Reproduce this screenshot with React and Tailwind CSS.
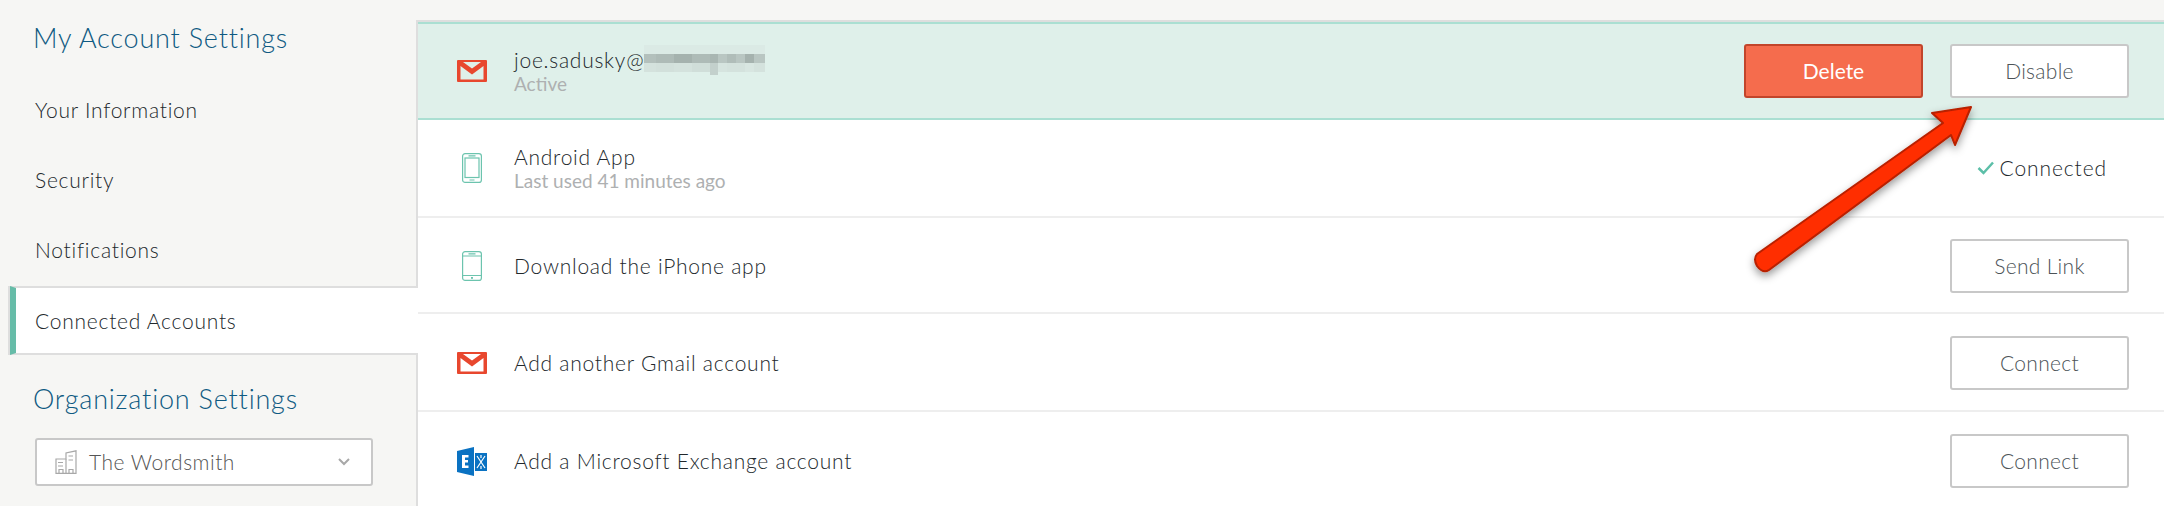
const font = 'font-["Lato","Noto_Sans",sans-serif]';

const GmailIcon = () => (
  <svg width="30" height="22" viewBox="0 0 30 22">
    <path
      fillRule="evenodd"
      d="M1 0 H29 Q30 0 30 1 V21 Q30 22 29 22 H1 Q0 22 0 21 V1 Q0 0 1 0 Z M6 2 L15 8.5 L24 2 Z M3.5 6 V19.5 H26.5 V6 L15 14.5 Z"
      fill="#e8472e"
    />
  </svg>
);

const AndroidIcon = () => (
  <svg width="20" height="30" viewBox="0 0 20 30" fill="none" stroke="#6cc4ae" strokeWidth="1.2">
    <rect x="0.6" y="0.6" width="18.8" height="28.8" rx="2.5" />
    <rect x="3" y="5" width="14" height="19.5" />
    <path d="M6.5 2.9 H13.5 M7.5 27 H12.5" />
  </svg>
);

const IphoneIcon = () => (
  <svg width="20" height="30" viewBox="0 0 20 30" fill="none" stroke="#6cc4ae" strokeWidth="1.2">
    <rect x="0.6" y="0.6" width="18.8" height="28.8" rx="2.5" />
    <path d="M0.6 5 H19.4 M0.6 24.5 H19.4 M6.5 2.9 H13.5" />
    <rect x="9" y="26" width="2" height="1.8" fill="#6cc4ae" stroke="none" />
  </svg>
);

const ExchangeIcon = () => (
  <svg width="30" height="29" viewBox="0 0 30 29">
    <path d="M0 4 L17 0 V29 L0 25 Z" fill="#0a72c2" />
    <path d="M5 8 H11.5 V10.5 H8 V13 H11 V15.5 H8 V18.5 H11.5 V21 H5 Z" fill="#fff" />
    <rect x="18" y="6" width="12" height="18" fill="#0a72c2" />
    <path d="M20 9 L28 21 M28 9 L20 21 M24 8 V11 M24 19 V22" stroke="#fff" strokeWidth="1.2" fill="none" />
  </svg>
);

const BuildingIcon = () => (
  <svg width="22" height="24" viewBox="0 0 22 24" fill="none" stroke="#a8a8a8" strokeWidth="1.2">
    <path d="M11 23.4 H1 V9 H11 V3 L21 0.8 V23.4 H11" />
    <path d="M11 9 V23 M13.5 6 H18 M13.5 10 H18 M3 12.5 H8 M3 16 H8 M4 23 V19.5 H8 V23 M14 23 V19.5 H18 V23" />
  </svg>
);

// pixelated blur over the address
const BlurredEmail = () => {
  const cols = [
    [0, 12, '#b3c0bc', '#d4e2dd'], [12, 18, '#aebbb7', '#d2e0db'], [30, 18, '#a5b2ae', '#d4e2dd'], [48, 18, '#aebbb7', '#d0ded9'],
    [66, 8, '#a9b6b2', '#c3d0cc'], [74, 9, '#b9c6c2', '#d6e4df'], [83, 9, '#b0bdb9', '#d4e2dd'], [92, 9, '#b9c6c2', '#d4e2dd'],
    [101, 9, '#a5b2ae', '#d8e6e1'], [110, 11, '#b9c6c2', '#d4e2dd'],
  ];
  return (
    <svg width="121" height="30" viewBox="0 0 121 30">
      <rect x="0" y="0" width="121" height="9" fill="#dbeae5" />
      {cols.map(([x, w, dark, light]) => (
        <g key={x}>
          <rect x={x} y="9" width={w} height="9" fill={dark} />
          <rect x={x} y="18" width={w} height="9" fill={light} />
        </g>
      ))}
      <rect x="66" y="27" width="8" height="3" fill="#c3d0cc" />
    </svg>
  );
};

const Arrow = () => (
  <svg className="absolute left-[1740px] top-[90px]" width="250" height="210" viewBox="0 0 250 210">
    <defs>
      <filter id="arrowShadow" x="-20%" y="-20%" width="140%" height="140%">
        <feDropShadow dx="0" dy="4" stdDeviation="4" floodColor="#000" floodOpacity="0.4" />
      </filter>
    </defs>
    <path
      d="M17 164 L203 33 L192 23 L231 17 L215 55 L211 45 L29 180 Q23 184 17 176 Q13 169 17 164 Z"
      fill="#ff2d00"
      stroke="#b82000"
      strokeWidth="2"
      strokeLinejoin="round"
      filter="url(#arrowShadow)"
    />
  </svg>
);

const Button = ({ children }) => (
  <button className="w-[179px] h-[54px] bg-white border-2 border-[#c8c8c8] rounded-[3px] text-[21px] font-light text-[#4c5357] tracking-[0.3px]">
    {children}
  </button>
);

const Row = ({ icon, title, sub, children, className }) => (
  <div className={`flex items-center pl-[38px] pr-[35px] ${className}`}>
    <div className="w-[32px] flex justify-center shrink-0">{icon}</div>
    <div className="ml-[26px] flex-1">
      {title}
      {sub && <div className="text-[19px] leading-[22px] text-[#aeb0b1]">{sub}</div>}
    </div>
    {children}
  </div>
);

const Title = ({ children }) => (
  <div className="text-[21px] leading-[26px] font-light text-[#22282c] tracking-[0.75px]">{children}</div>
);

const NavItem = ({ children, active }) => (
  <div
    className={
      active
        ? 'h-[69px] mt-[1px] flex items-center ml-[10px] pl-[19px] bg-white border-y-2 border-[#dedede] border-l-[6px] border-l-[#66bca8] shadow-[-2px_0_0_#dedede] text-[21px] font-light text-[#22282c] tracking-[0.75px] -mr-[2px] relative z-10'
        : 'h-[70px] flex items-center pl-[35px] text-[21px] font-light text-[#22282c] tracking-[0.75px]'
    }
  >
    {children}
  </div>
);

export default function App() {
  return (
    <div className={`relative flex h-[506px] overflow-hidden bg-[#f6f6f4] ${font}`}>
      {/* Sidebar */}
      <aside className="w-[416px] shrink-0">
        <h2 className="pl-[33px] pt-[20px] text-[27px] leading-[36px] font-light text-[#0f5a82] tracking-[0.8px]">My Account Settings</h2>
        <nav className="mt-[19px]">
          <NavItem>Your Information</NavItem>
          <NavItem>Security</NavItem>
          <NavItem>Notifications</NavItem>
          <NavItem active>Connected Accounts</NavItem>
        </nav>
        <h2 className="pl-[33px] pt-[26px] text-[27px] leading-[36px] font-light text-[#0f5a82] tracking-[0.8px]">Organization Settings</h2>
        <div className="ml-[35px] mt-[21px] w-[338px] h-[48px] flex items-center pl-[18px] pr-[20px] bg-white border-2 border-[#c8c8c8] rounded-[3px]">
          <BuildingIcon />
          <span className="ml-[12px] flex-1 text-[21px] font-light text-[#555] tracking-[0.5px]">The Wordsmith</span>
          <svg width="14" height="10" viewBox="0 0 14 10" fill="none" stroke="#a8a8a8" strokeWidth="2">
            <path d="M2 2 L7 7 L12 2" />
          </svg>
        </div>
      </aside>

      {/* Accounts list */}
      <main className="flex-1 mt-[20px] bg-white border-l-2 border-t-2 border-[#dedede]">
        <Row
          className="h-[98px] bg-[#dff0ea] border-y-2 border-[#aadfd2]"
          icon={<GmailIcon />}
          title={
            <div className="flex items-center h-[26px]">
              <Title>joe.sadusky@</Title>
              <BlurredEmail />
            </div>
          }
          sub="Active"
        >
          <button className="mr-[27px] w-[179px] h-[54px] bg-[#f56c4d] border-2 border-[#c2452b] rounded-[3px] text-[21px] text-white">
            Delete
          </button>
          <Button>Disable</Button>
        </Row>
        <Row
          className="h-[98px] border-b-2 border-[#eeeeee]"
          icon={<AndroidIcon />}
          title={<Title>Android App</Title>}
          sub="Last used 41 minutes ago"
        >
          <div className="flex items-center pr-[22px] text-[21px] font-light text-[#22282c] tracking-[0.9px]">
            <svg width="18" height="14" viewBox="0 0 18 14" fill="none" stroke="#5cbfa8" strokeWidth="2.5" className="mr-[5px]">
              <path d="M1.5 7 L6.5 12 L16 1.5" />
            </svg>
            Connected
          </div>
        </Row>
        <Row className="h-[96px] pt-[2px] border-b-2 border-[#eeeeee]" icon={<IphoneIcon />} title={<Title>Download the iPhone app</Title>}>
          <Button>Send Link</Button>
        </Row>
        <Row className="h-[98px] pt-[2px] border-b-2 border-[#eeeeee]" icon={<GmailIcon />} title={<Title>Add another Gmail account</Title>}>
          <Button>Connect</Button>
        </Row>
        <Row className="h-[96px] pt-[2px]" icon={<ExchangeIcon />} title={<Title>Add a Microsoft Exchange account</Title>}>
          <Button>Connect</Button>
        </Row>
      </main>

      <Arrow />
    </div>
  );
}
